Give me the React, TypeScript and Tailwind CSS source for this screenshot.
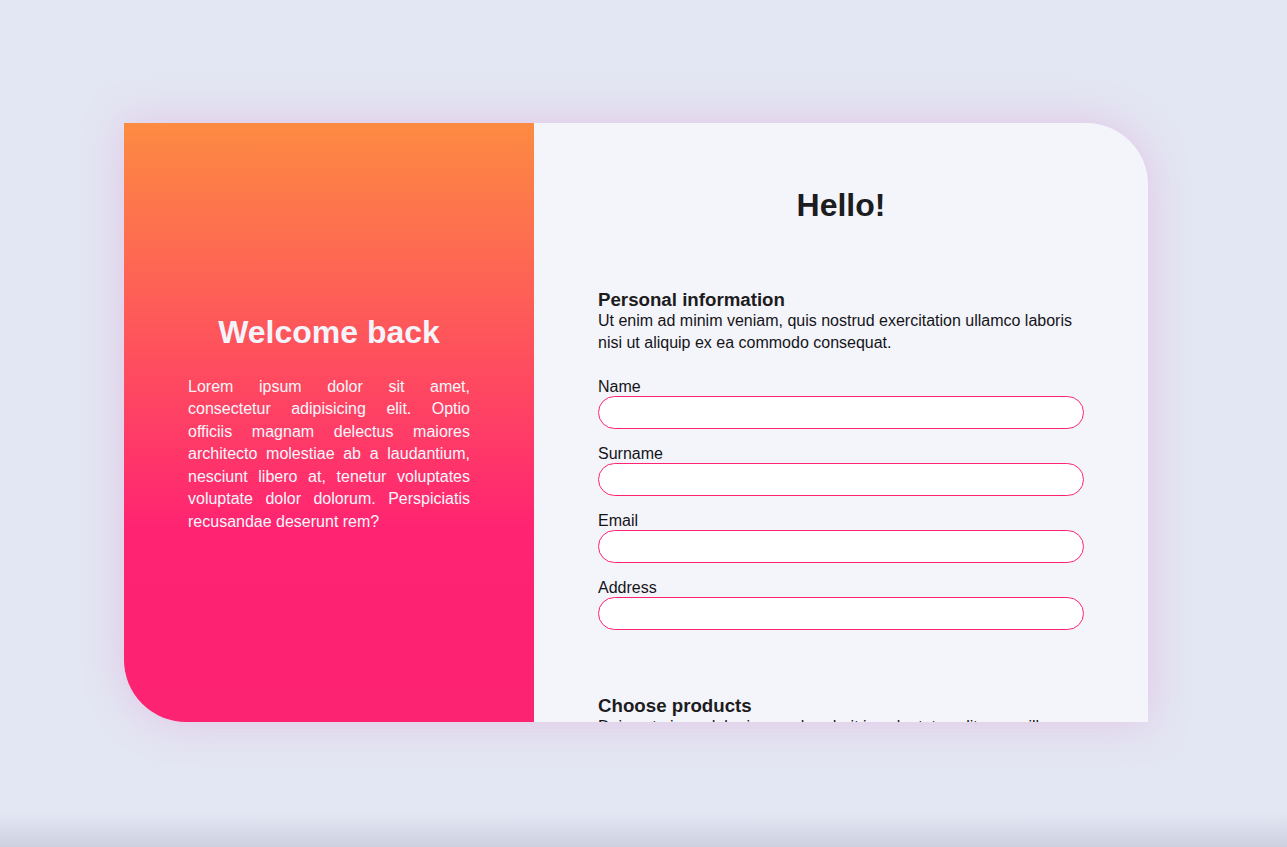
const fields = ["Name", "Surname", "Email", "Address"];

const Field = ({ label }: { label: string }) => (
    <div className="mb-4 flex flex-col">
        <label className="text-[16px] leading-[18px] text-[#141418]">{label}</label>
        <input
            type="text"
            className="h-[33px] w-full rounded-full border border-[#ff2372] bg-white px-4 outline-none"
        />
    </div>
);

export default function App() {
    return (
        <div
            className="flex h-screen w-full items-center bg-[linear-gradient(to_bottom,#e3e6f3_96%,#cdd0df)] pl-[124px]"
            style={{ fontFamily: '"Liberation Sans", Arial, sans-serif' }}
        >
            <div className="mb-[2px] flex h-[599px] w-[1024px] rounded-bl-[62px] rounded-tr-[62px] shadow-[0_0_40px_rgba(226,190,226,0.85)]">
                {/* left: gradient welcome */}
                <div className="flex w-[410px] flex-col items-center justify-center rounded-bl-[62px] bg-[linear-gradient(to_bottom,#fd8b42_0%,#ff2372_68%,#fc2372_100%)] px-16 pt-[2px]">
                    <h2 className="text-[32px] font-bold leading-[37px] text-[#f4f4fa]">Welcome back</h2>
                    <p className="mt-[25px] text-justify text-[16px] leading-[22.5px] text-[#f6f6fb]">
                        Lorem ipsum dolor sit amet, consectetur adipisicing elit. Optio officiis magnam delectus maiores architecto molestiae ab a laudantium, nesciunt libero at, tenetur voluptates voluptate dolor dolorum. Perspiciatis recusandae deserunt rem?
                    </p>
                </div>

                {/* right: form */}
                <div className="flex-1 overflow-hidden rounded-tr-[62px] bg-[#f4f5fb] px-16 pt-[64px]">
                    <h1 className="text-center text-[32px] font-bold leading-[37px] text-[#1c1c21]">Hello!</h1>

                    <div className="mt-[65px]">
                        <h3 className="text-[18.7px] font-bold leading-[21px] text-[#1c1c21]">Personal information</h3>
                        <p className="text-[16px] leading-[22px] text-[#141418]">
                            Ut enim ad minim veniam, quis nostrud exercitation ullamco laboris nisi ut aliquip ex ea commodo consequat.
                        </p>
                        <div className="mt-6">
                            {fields.map((f) => (
                                <Field key={f} label={f} />
                            ))}
                        </div>
                    </div>

                    <div className="mt-[65px]">
                        <h3 className="text-[18.7px] font-bold leading-[21px] text-[#1c1c21]">Choose products</h3>
                        <p className="text-[16px] leading-[22px] text-[#141418]">
                            Duis aute irure dolor in reprehenderit in voluptate velit esse cillum dolore eu fugiat nulla pariatur.
                        </p>
                    </div>
                </div>
            </div>
        </div>
    );
}
